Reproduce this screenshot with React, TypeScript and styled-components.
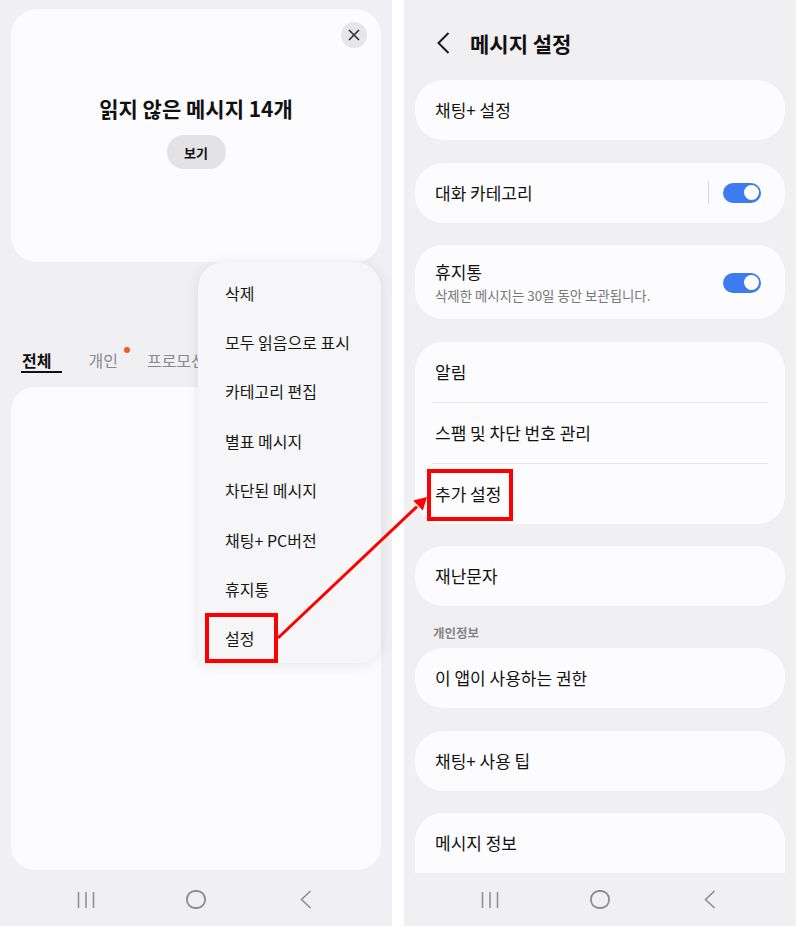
import * as React from "react";
import styled, { createGlobalStyle } from "styled-components";

const GlobalStyle = createGlobalStyle`
  html, body {
    margin: 0;
    padding: 0;
    background: #fff;
  }
  body {
    font-family: "Noto Sans CJK KR", "Noto Sans", sans-serif;
    color: #111;
  }
  * {
    box-sizing: border-box;
  }
`;

const Frame = styled.div`
  position: relative;
  width: 796px;
  height: 926px;
  display: grid;
  grid-template-columns: 392px 392px;
  column-gap: 12px;
  overflow: hidden;
`;

const Phone = styled.div`
  position: relative;
  height: 926px;
  background: #f0f0f2;
  display: flex;
  flex-direction: column;
  overflow: hidden;
`;

const Body = styled.div`
  flex: 1;
  min-height: 0;
  display: flex;
  flex-direction: column;
  padding: 9px 11px 3px;
  overflow: hidden;
`;

// ---- left screen ----
const PromoCard = styled.div`
  height: 253px;
  flex-shrink: 0;
  background: #fcfcfe;
  border-radius: 26px;
  display: flex;
  flex-direction: column;
  align-items: center;
`;

const PromoTop = styled.div`
  align-self: stretch;
  display: flex;
  justify-content: flex-end;
  padding: 13px 14px 0;
`;

const CloseButton = styled.button`
  width: 26px;
  height: 26px;
  border: 0;
  padding: 0;
  border-radius: 50%;
  background: #e6e6e8;
  display: flex;
  align-items: center;
  justify-content: center;
`;

const PromoTitle = styled.h2`
  margin: 46px 0 0;
  font-size: 21px;
  line-height: 28px;
  font-weight: 700;
  color: #111;
`;

const PillButton = styled.button`
  margin-top: 13px;
  width: 59px;
  height: 34px;
  border: 0;
  border-radius: 17px;
  background: #e3e3e5;
  font-family: inherit;
  font-size: 13px;
  font-weight: 700;
  color: #111;
`;

const TabRow = styled.div`
  margin-top: 87px;
  padding-left: 10px;
  display: flex;
  align-items: flex-start;
  white-space: nowrap;
`;

const Tab = styled.span<{ $active?: boolean }>`
  font-size: 16px;
  line-height: 22px;
  font-weight: ${p => (p.$active ? 700 : 400)};
  color: ${p => (p.$active ? "#111" : "#8a8a8c")};
  padding: ${p => (p.$active ? "0 11px 0 1px" : "0")};
  border-bottom: 2px solid ${p => (p.$active ? "#111" : "transparent")};
  margin-right: ${p => (p.$active ? "26px" : "0")};
`;

const NewDot = styled.span`
  width: 6px;
  height: 6px;
  border-radius: 50%;
  background: #ef5a1f;
  margin: -2px 17px 0 6px;
`;

const ListCard = styled.div`
  flex: 1;
  margin-top: 14px;
  background: #fcfcfe;
  border-radius: 24px;
`;

const PopupMenu = styled.ul`
  position: absolute;
  top: 262px;
  left: 198px;
  width: 183px;
  margin: 0;
  padding: 6px 0 0;
  list-style: none;
  background: #f6f6f8;
  border-radius: 26px 26px 22px 4px;
  box-shadow: 0 2px 14px rgba(0, 0, 0, 0.09);
  z-index: 2;
`;

const MenuItem = styled.li`
  height: 49.4px;
  display: flex;
  align-items: center;
  padding-left: 27px;
  font-size: 16px;
  line-height: 20px;
  color: #161616;
  white-space: nowrap;
`;

const Mark = styled.span<{ $inset: string }>`
  position: relative;
  &::after {
    content: "";
    position: absolute;
    inset: ${p => p.$inset};
    border: 4px solid #ff0000;
  }
`;

// ---- right screen ----
const Header = styled.div`
  height: 80px;
  flex-shrink: 0;
  display: flex;
  align-items: center;
  padding: 6px 0 0 33px;
  margin: -9px -11px 0;
  gap: 20px;
`;

const HeaderTitle = styled.h1`
  margin: 0;
  font-size: 21px;
  line-height: 28px;
  font-weight: 700;
  color: #111;
`;

const SettingsList = styled.div`
  display: flex;
  flex-direction: column;
  gap: 22.6px;
`;

const Card = styled.div<{ $cut?: boolean }>`
  background: #fcfcfe;
  border-radius: ${p => (p.$cut ? "28px 28px 0 0" : "28px")};
  flex-shrink: 0;
`;

const Row = styled.div`
  height: 60px;
  display: flex;
  align-items: center;
  padding: 0 24px 0 20px;
`;

const TallRow = styled(Row)`
  height: 74px;
  padding-top: 1px;
`;

const RowText = styled.div`
  flex: 1;
  display: flex;
  flex-direction: column;
  gap: 3px;
`;

const RowTitle = styled.span`
  font-size: 17px;
  line-height: 22px;
  color: #111;
  white-space: nowrap;
`;

const RowSub = styled.span`
  font-size: 13.4px;
  line-height: 18px;
  color: #777779;
  white-space: nowrap;
`;

const VRule = styled.span`
  width: 1px;
  height: 23px;
  background: #d6d6d8;
  margin-right: 14px;
`;

const Switch = styled.span<{ $on?: boolean }>`
  width: 38px;
  height: 20px;
  border-radius: 10px;
  padding: 0 2.5px;
  background: ${p => (p.$on ? "#3d7cf0" : "#c9c9cb")};
  display: inline-flex;
  align-items: center;
  justify-content: ${p => (p.$on ? "flex-end" : "flex-start")};
  &::after {
    content: "";
    width: 15px;
    height: 15px;
    border-radius: 50%;
    background: #fff;
  }
`;

const HRule = styled.div`
  height: 1px;
  margin: 0 17px;
  background: #e5e5e7;
`;

const Section = styled.div`
  margin-top: -4px;
  display: flex;
  flex-direction: column;
`;

const SectionLabel = styled.div`
  padding-left: 18px;
  margin-bottom: 7px;
  font-size: 12.5px;
  line-height: 16px;
  font-weight: 700;
  color: #838385;
`;

// ---- navigation ----
const NavBar = styled.div`
  height: 53px;
  flex-shrink: 0;
  display: grid;
  grid-template-columns: repeat(3, 110px);
  justify-content: center;
  align-items: center;
  justify-items: center;
`;

const Overlay = styled.svg`
  position: absolute;
  inset: 0;
  pointer-events: none;
  z-index: 5;
`;

const navStroke = "#8c8c8e";

const RecentIcon = () => (
  <svg width="18" height="18" viewBox="0 0 18 18">
    <path d="M1.5 1v16M9 1v16M16.5 1v16" stroke={navStroke} strokeWidth="1.5" fill="none" />
  </svg>
);

const HomeIcon = () => (
  <svg width="20" height="19" viewBox="0 0 20 19">
    <rect x="1" y="1" width="18" height="17" rx="8" stroke={navStroke} strokeWidth="1.8" fill="none" />
  </svg>
);

const BackIcon = () => (
  <svg width="12" height="19" viewBox="0 0 12 19">
    <path d="M10.5 1L1.5 9.5l9 8.5" stroke={navStroke} strokeWidth="1.6" fill="none" />
  </svg>
);

const Navigation = () => (
  <NavBar>
    <RecentIcon />
    <HomeIcon />
    <BackIcon />
  </NavBar>
);

const menuItems = [
  "삭제",
  "모두 읽음으로 표시",
  "카테고리 편집",
  "별표 메시지",
  "차단된 메시지",
  "채팅+ PC버전",
  "휴지통",
];

export default function App() {
  return (
    <>
      <GlobalStyle />
      <Frame>
        <Phone>
          <Body>
            <PromoCard>
              <PromoTop>
                <CloseButton aria-label="닫기">
                  <svg width="12" height="12" viewBox="0 0 12 12">
                    <path d="M1 1l10 10M11 1L1 11" stroke="#2a2a2a" strokeWidth="1.5" />
                  </svg>
                </CloseButton>
              </PromoTop>
              <PromoTitle>읽지 않은 메시지 14개</PromoTitle>
              <PillButton>보기</PillButton>
            </PromoCard>
            <TabRow>
              <Tab $active>전체</Tab>
              <Tab>개인</Tab>
              <NewDot />
              <Tab>프로모션</Tab>
            </TabRow>
            <ListCard />
          </Body>
          <Navigation />
          <PopupMenu>
            {menuItems.map(item => (
              <MenuItem key={item}>{item}</MenuItem>
            ))}
            <MenuItem>
              <Mark $inset="-15px -24px -15px -20px">설정</Mark>
            </MenuItem>
          </PopupMenu>
        </Phone>

        <Phone>
          <Body>
            <Header>
              <svg width="13" height="22" viewBox="0 0 13 22">
                <path d="M11.5 1L1.5 11l10 10" stroke="#1a1a1a" strokeWidth="2" fill="none" />
              </svg>
              <HeaderTitle>메시지 설정</HeaderTitle>
            </Header>
            <SettingsList>
              <Card>
                <Row>
                  <RowTitle>채팅+ 설정</RowTitle>
                </Row>
              </Card>
              <Card>
                <Row>
                  <RowText>
                    <RowTitle>대화 카테고리</RowTitle>
                  </RowText>
                  <VRule />
                  <Switch $on />
                </Row>
              </Card>
              <Card>
                <TallRow>
                  <RowText>
                    <RowTitle>휴지통</RowTitle>
                    <RowSub>삭제한 메시지는 30일 동안 보관됩니다.</RowSub>
                  </RowText>
                  <Switch $on />
                </TallRow>
              </Card>
              <Card>
                <Row>
                  <RowTitle>알림</RowTitle>
                </Row>
                <HRule />
                <Row>
                  <RowTitle>스팸 및 차단 번호 관리</RowTitle>
                </Row>
                <HRule />
                <Row>
                  <RowTitle>
                    <Mark $inset="-12px -12px -15px -8px">추가 설정</Mark>
                  </RowTitle>
                </Row>
              </Card>
              <Card>
                <Row>
                  <RowTitle>재난문자</RowTitle>
                </Row>
              </Card>
              <Section>
                <SectionLabel>개인정보</SectionLabel>
                <Card>
                  <Row>
                    <RowTitle>이 앱이 사용하는 권한</RowTitle>
                  </Row>
                </Card>
              </Section>
              <Card>
                <Row>
                  <RowTitle>채팅+ 사용 팁</RowTitle>
                </Row>
              </Card>
              <Card $cut>
                <Row>
                  <RowTitle>메시지 정보</RowTitle>
                </Row>
              </Card>
            </SettingsList>
          </Body>
          <Navigation />
        </Phone>

        <Overlay width="796" height="926" viewBox="0 0 796 926">
          <line x1="278" y1="638" x2="417" y2="506.5" stroke="#ff0000" strokeWidth="3" />
          <polygon points="427,497 422.8,510.6 413.2,500.6" fill="#ff0000" />
        </Overlay>
      </Frame>
    </>
  );
}
